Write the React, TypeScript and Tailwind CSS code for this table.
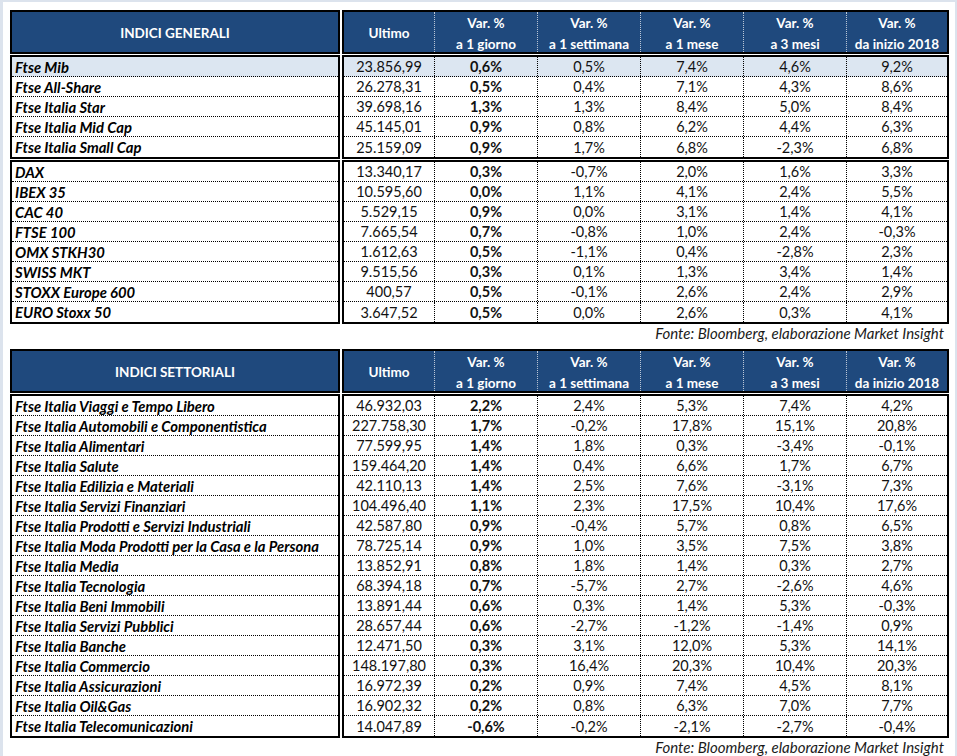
type Row = [string, string, string, string, string, string, string];

const generali1: Row[] = [
  ["Ftse Mib", "23.856,99", "0,6%", "0,5%", "7,4%", "4,6%", "9,2%"],
  ["Ftse All-Share", "26.278,31", "0,5%", "0,4%", "7,1%", "4,3%", "8,6%"],
  ["Ftse Italia Star", "39.698,16", "1,3%", "1,3%", "8,4%", "5,0%", "8,4%"],
  ["Ftse Italia Mid Cap", "45.145,01", "0,9%", "0,8%", "6,2%", "4,4%", "6,3%"],
  ["Ftse Italia Small Cap", "25.159,09", "0,9%", "1,7%", "6,8%", "-2,3%", "6,8%"],
];

const generali2: Row[] = [
  ["DAX", "13.340,17", "0,3%", "-0,7%", "2,0%", "1,6%", "3,3%"],
  ["IBEX 35", "10.595,60", "0,0%", "1,1%", "4,1%", "2,4%", "5,5%"],
  ["CAC 40", "5.529,15", "0,9%", "0,0%", "3,1%", "1,4%", "4,1%"],
  ["FTSE 100", "7.665,54", "0,7%", "-0,8%", "1,0%", "2,4%", "-0,3%"],
  ["OMX STKH30", "1.612,63", "0,5%", "-1,1%", "0,4%", "-2,8%", "2,3%"],
  ["SWISS MKT", "9.515,56", "0,3%", "0,1%", "1,3%", "3,4%", "1,4%"],
  ["STOXX Europe 600", "400,57", "0,5%", "-0,1%", "2,6%", "2,4%", "2,9%"],
  ["EURO Stoxx 50", "3.647,52", "0,5%", "0,0%", "2,6%", "0,3%", "4,1%"],
];

const settoriali: Row[] = [
  ["Ftse Italia Viaggi e Tempo Libero", "46.932,03", "2,2%", "2,4%", "5,3%", "7,4%", "4,2%"],
  ["Ftse Italia Automobili e Componentistica", "227.758,30", "1,7%", "-0,2%", "17,8%", "15,1%", "20,8%"],
  ["Ftse Italia Alimentari", "77.599,95", "1,4%", "1,8%", "0,3%", "-3,4%", "-0,1%"],
  ["Ftse Italia Salute", "159.464,20", "1,4%", "0,4%", "6,6%", "1,7%", "6,7%"],
  ["Ftse Italia Edilizia e Materiali", "42.110,13", "1,4%", "2,5%", "7,6%", "-3,1%", "7,3%"],
  ["Ftse Italia Servizi Finanziari", "104.496,40", "1,1%", "2,3%", "17,5%", "10,4%", "17,6%"],
  ["Ftse Italia Prodotti e Servizi Industriali", "42.587,80", "0,9%", "-0,4%", "5,7%", "0,8%", "6,5%"],
  ["Ftse Italia Moda Prodotti per la Casa e la Persona", "78.725,14", "0,9%", "1,0%", "3,5%", "7,5%", "3,8%"],
  ["Ftse Italia Media", "13.852,91", "0,8%", "1,8%", "1,4%", "0,3%", "2,7%"],
  ["Ftse Italia Tecnologia", "68.394,18", "0,7%", "-5,7%", "2,7%", "-2,6%", "4,6%"],
  ["Ftse Italia Beni Immobili", "13.891,44", "0,6%", "0,3%", "1,4%", "5,3%", "-0,3%"],
  ["Ftse Italia Servizi Pubblici", "28.657,44", "0,6%", "-2,7%", "-1,2%", "-1,4%", "0,9%"],
  ["Ftse Italia Banche", "12.471,50", "0,3%", "3,1%", "12,0%", "5,3%", "14,1%"],
  ["Ftse Italia Commercio", "148.197,80", "0,3%", "16,4%", "20,3%", "10,4%", "20,3%"],
  ["Ftse Italia Assicurazioni", "16.972,39", "0,2%", "0,9%", "7,4%", "4,5%", "8,1%"],
  ["Ftse Italia Oil&Gas", "16.902,32", "0,2%", "0,8%", "6,3%", "7,0%", "7,7%"],
  ["Ftse Italia Telecomunicazioni", "14.047,89", "-0,6%", "-0,2%", "-2,1%", "-2,7%", "-0,4%"],
];

const colWidths = ["w-[90px]", "w-[103px]", "w-[103px]", "w-[103px]", "w-[103px]", "w-[101px]"];

const subtitles = ["a 1 giorno", "a 1 settimana", "a 1 mese", "a 3 mesi", "da inizio 2018"];

function Header({ title }: { title: string }) {
  return (
    <div className="flex gap-[2px]">
      <div className="w-[330px] h-[44px] border-2 border-black bg-[#1f497d] flex items-center justify-center pt-[2px] text-white font-bold text-[13.5px]">
        {title}
      </div>
      <div className="w-[607px] h-[44px] border-2 border-black bg-[#1f497d] flex text-white font-bold text-[13.5px]">
        <div className={`${colWidths[0]} flex items-center justify-center pt-[3px]`}>Ultimo</div>
        {subtitles.map((s, i) => (
          <div
            key={s}
            className={`${colWidths[i + 1]} border-l border-dotted border-white/70 flex flex-col items-center justify-center pt-[3px] leading-[21px]`}
          >
            <span>Var. %</span>
            <span>{s}</span>
          </div>
        ))}
      </div>
    </div>
  );
}

function Group({ rows, highlightFirst }: { rows: Row[]; highlightFirst?: boolean }) {
  return (
    <div className="flex gap-[2px] mt-px">
      <div className="w-[330px] border-2 border-black">
        {rows.map((r, i) => (
          <div
            key={r[0]}
            className={`h-5 flex items-center pt-px pl-[3px] font-bold italic text-black text-[14.8px] whitespace-nowrap ${
              i < rows.length - 1 ? "border-b border-dotted border-black" : ""
            } ${highlightFirst && i === 0 ? "bg-[#dce6f1]" : ""}`}
          >
            {r[0]}
          </div>
        ))}
      </div>
      <div className="w-[607px] border-2 border-black">
        {rows.map((r, i) => (
          <div
            key={r[0]}
            className={`h-5 flex text-[#111] ${
              i < rows.length - 1 ? "border-b border-dotted border-black" : ""
            } ${highlightFirst && i === 0 ? "bg-[#dce6f1]" : ""}`}
          >
            {r.slice(1).map((v, j) => (
              <div
                key={j}
                className={`${colWidths[j]} flex items-center justify-center pt-px ${
                  j > 0 ? "border-l border-dotted border-black" : ""
                } ${j === 1 ? "font-bold" : ""}`}
              >
                {v}
              </div>
            ))}
          </div>
        ))}
      </div>
    </div>
  );
}

function Fonte() {
  return (
    <div className="w-[939px] text-right italic text-[#1a1a1a] text-[15px] leading-4 pr-[5px] pt-[1px]">
      Fonte: Bloomberg, elaborazione Market Insight
    </div>
  );
}

export default function App() {
  return (
    <main className="w-[957px] h-[756px] bg-white border-t-2 border-l-[3px] border-r-2 border-[#dce3ed] overflow-hidden font-['Lato',sans-serif] text-[14.5px]">
      <div className="pl-[7px] pt-[8px]">
        <Header title="INDICI GENERALI" />
        <Group rows={generali1} highlightFirst />
        <Group rows={generali2} />
        <Fonte />
        <div className="mt-[8px]">
          <Header title="INDICI SETTORIALI" />
          <Group rows={settoriali} />
        </div>
        <Fonte />
      </div>
    </main>
  );
}
